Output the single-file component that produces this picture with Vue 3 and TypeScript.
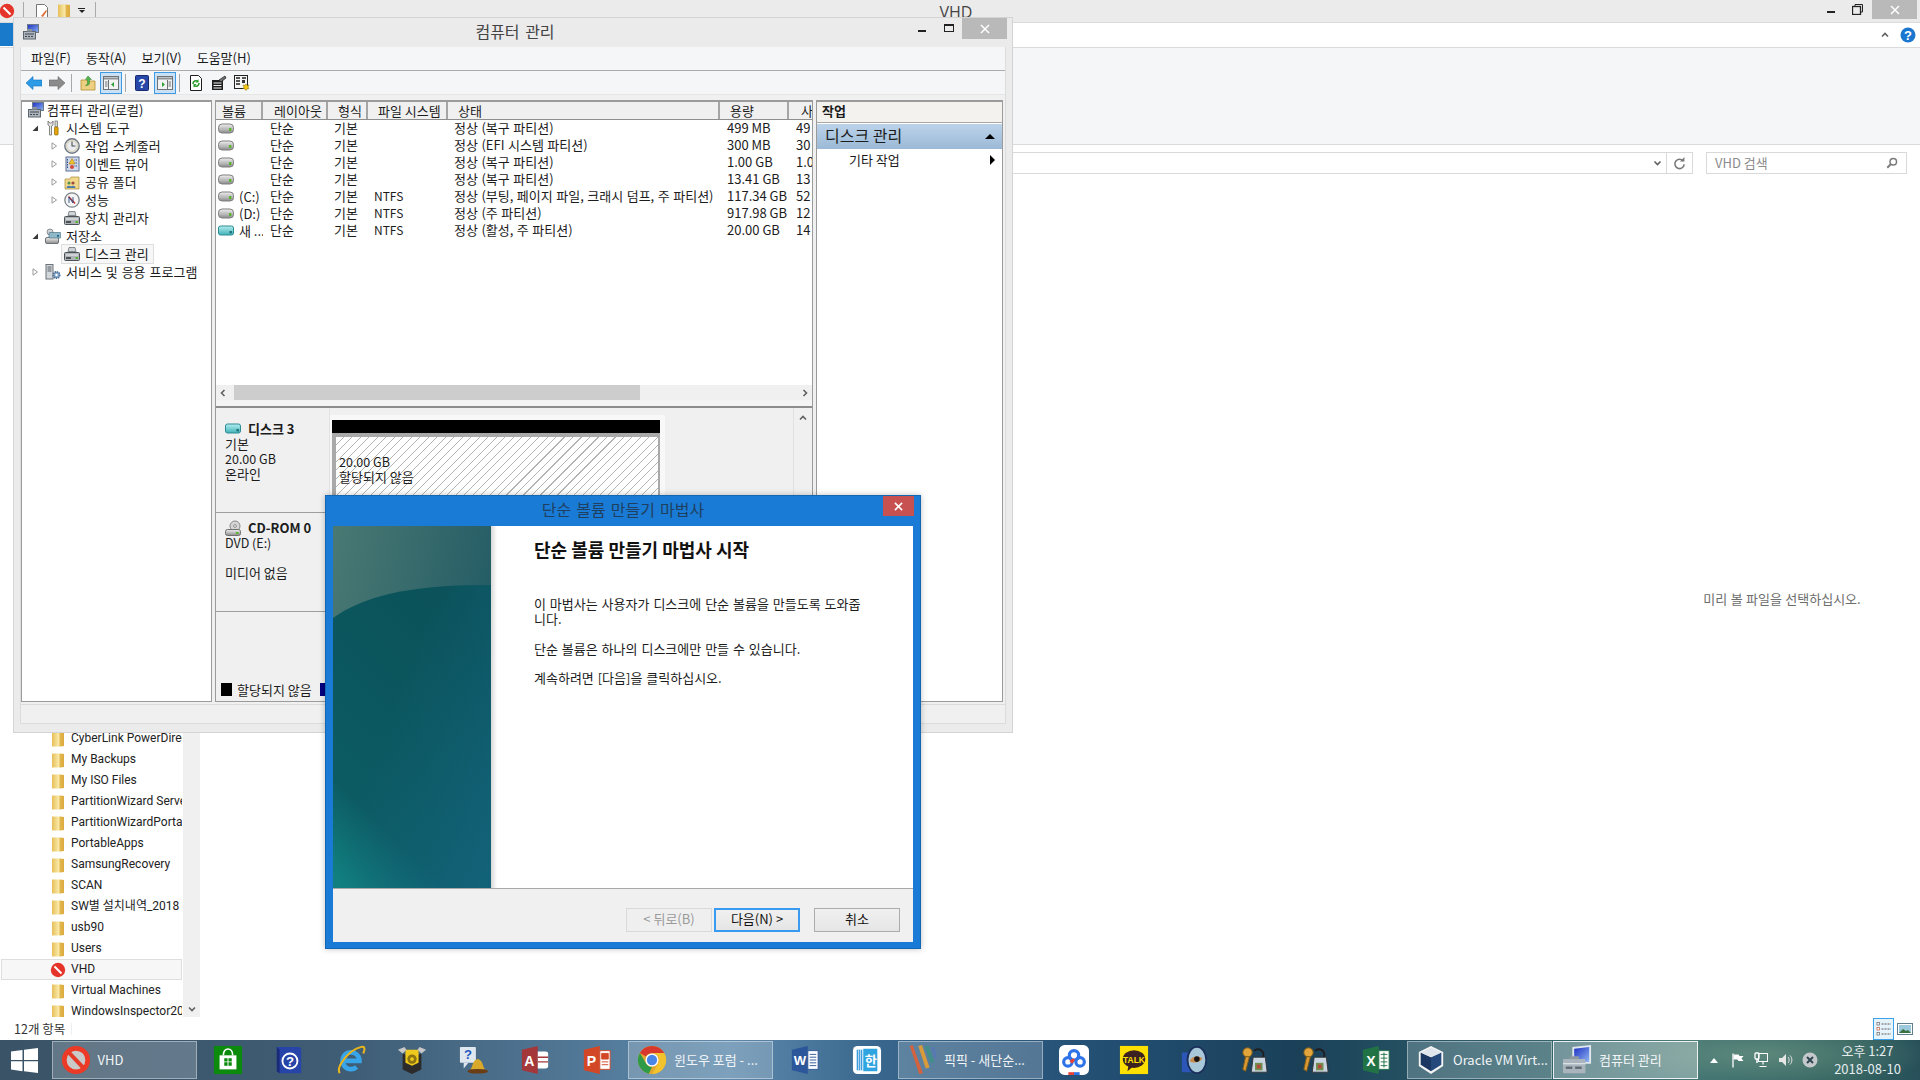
<script setup lang="ts">
interface TreeItem { label: string; icon: string; level: number; twist?: 'open' | 'closed'; selected?: boolean }
interface Volume { name: string; icon?: string; fs: string; status: string; size: string; free: string }
interface TaskItem { icon: string; label?: string; cls?: string }

const tree: TreeItem[] = [
  { label: '컴퓨터 관리(로컬)', icon: 'mmc', level: 0 },
  { label: '시스템 도구', icon: 'tools', level: 1, twist: 'open' },
  { label: '작업 스케줄러', icon: 'clock', level: 2, twist: 'closed' },
  { label: '이벤트 뷰어', icon: 'event', level: 2, twist: 'closed' },
  { label: '공유 폴더', icon: 'share', level: 2, twist: 'closed' },
  { label: '성능', icon: 'gauge', level: 2, twist: 'closed' },
  { label: '장치 관리자', icon: 'dev', level: 2 },
  { label: '저장소', icon: 'storage', level: 1, twist: 'open' },
  { label: '디스크 관리', icon: 'dev', level: 2, selected: true },
  { label: '서비스 및 응용 프로그램', icon: 'svc', level: 1, twist: 'closed' },
]

const columns = ['볼륨', '레이아웃', '형식', '파일 시스템', '상태', '용량', '사']

const volumes: Volume[] = [
  { name: '', fs: '', status: '정상 (복구 파티션)', size: '499 MB', free: '49' },
  { name: '', fs: '', status: '정상 (EFI 시스템 파티션)', size: '300 MB', free: '30' },
  { name: '', fs: '', status: '정상 (복구 파티션)', size: '1.00 GB', free: '1.0' },
  { name: '', fs: '', status: '정상 (복구 파티션)', size: '13.41 GB', free: '13' },
  { name: '(C:)', fs: 'NTFS', status: '정상 (부팅, 페이지 파일, 크래시 덤프, 주 파티션)', size: '117.34 GB', free: '52' },
  { name: '(D:)', fs: 'NTFS', status: '정상 (주 파티션)', size: '917.98 GB', free: '12' },
  { name: '새 ...', icon: 'disk-blue', fs: 'NTFS', status: '정상 (활성, 주 파티션)', size: '20.00 GB', free: '14' },
]

const folders = [
  'CyberLink PowerDirector', 'My Backups', 'My ISO Files', 'PartitionWizard Server', 'PartitionWizardPortable',
  'PortableApps', 'SamsungRecovery', 'SCAN', 'SW별 설치내역_2018', 'usb90', 'Users', 'VHD', 'Virtual Machines',
  'WindowsInspector2018',
]

const taskItems: TaskItem[] = [
  { icon: 'stop-big', label: 'VHD', cls: 'wide' },
  { icon: 'store' }, { icon: 'helpbook' }, { icon: 'ie' }, { icon: 'box' }, { icon: 'bell' }, { icon: 'access' }, { icon: 'ppt' },
  { icon: 'chrome', label: '윈도우 포럼 - ...', cls: 'wide' },
  { icon: 'word', cls: 'loose' }, { icon: 'hanword', cls: 'loose' },
  { icon: 'picpick', label: '픽픽 - 새단순...', cls: 'wide' },
  { icon: 'baidu', cls: 'tight' }, { icon: 'kakao', cls: 'tight' }, { icon: 'eye', cls: 'tight' },
  { icon: 'keys', cls: 'tight' }, { icon: 'keys', cls: 'tight' }, { icon: 'excel', cls: 'tight' },
  { icon: 'vbox', label: 'Oracle VM Virt...', cls: 'wide' },
  { icon: 'mmc-big', label: '컴퓨터 관리', cls: 'wide current' },
]
</script>

<template>
  <div class="desktop">
    <svg class="sprites" width="0" height="0" aria-hidden="true">
      <defs>
        <linearGradient id="g-disk" x1="0" y1="0" x2="0" y2="1"><stop offset="0" stop-color="#f0f0f0" /><stop offset="1" stop-color="#8c8c8c" /></linearGradient>
        <linearGradient id="g-teal" x1="0" y1="0" x2="0" y2="1"><stop offset="0" stop-color="#b5eef0" /><stop offset="1" stop-color="#3fb2b8" /></linearGradient>
        <linearGradient id="g-top" x1="0" y1="0" x2="1" y2="0.45"><stop offset="0" stop-color="#4a7973" /><stop offset="1" stop-color="#215a64" /></linearGradient>
        <linearGradient id="g-low" x1="0.6" y1="0" x2="0.1" y2="1"><stop offset="0" stop-color="#0b525a" /><stop offset="0.75" stop-color="#0c5b63" /><stop offset="1" stop-color="#11807f" /></linearGradient>
        <linearGradient id="g-tint" x1="0.3" y1="0.5" x2="1" y2="1"><stop offset="0" stop-color="#14647f" stop-opacity="0" /><stop offset="1" stop-color="#14647f" stop-opacity="0.8" /></linearGradient>
        <linearGradient id="g-screen" x1="0" y1="0" x2="1" y2="1"><stop offset="0" stop-color="#1c2fc4" /><stop offset="1" stop-color="#8fb6f0" /></linearGradient>
        <linearGradient id="g-folder" x1="0" y1="0" x2="1" y2="0"><stop offset="0" stop-color="#e6bf58" /><stop offset="0.55" stop-color="#f9e9a8" /><stop offset="0.7" stop-color="#e2b64c" /><stop offset="1" stop-color="#dcaa3f" /></linearGradient>
      </defs>
      <symbol id="i-stop" viewBox="0 0 16 16"><circle cx="8" cy="8" r="7.2" fill="#e5352b" /><path d="M3.8 5.2l1.4-1.4 7 7-1.4 1.4z" fill="#fff" /></symbol>
      <symbol id="i-folder" viewBox="0 0 16 16"><path d="M2 1.500h8l4 .5v13l-4 .5H2z" fill="url(#g-folder)" /></symbol>
      <symbol id="i-disk" viewBox="0 0 16 16"><rect x="0.500" y="3" width="15" height="9" rx="3.500" fill="url(#g-disk)" stroke="#7f7f7f" /><path d="M2 8.500h12" stroke="#b9b9b9" /><rect x="11" y="7" width="2.400" height="3" fill="#5cb531" /></symbol>
      <symbol id="i-disk-blue" viewBox="0 0 16 16"><rect x="0.500" y="3" width="15" height="9" rx="2" fill="url(#g-teal)" stroke="#2c8c92" /><rect x="11.500" y="8" width="2.400" height="2.400" fill="#1d6f74" /></symbol>
      <symbol id="i-cd" viewBox="0 0 16 16"><circle cx="10" cy="6" r="5" fill="#d6d6d6" stroke="#8a8a8a" /><circle cx="10" cy="6" r="1.400" fill="#fff" stroke="#8a8a8a" /><rect x="0.500" y="9.500" width="15" height="6" rx="2" fill="url(#g-disk)" stroke="#6f6f6f" /><rect x="11" y="12" width="2.600" height="2" fill="#5cb531" /></symbol>
      <symbol id="i-mmc" viewBox="0 0 16 16"><rect x="4.500" y="0.500" width="11" height="8" fill="url(#g-screen)" stroke="#6d7a88" /><rect x="0.500" y="7.500" width="12" height="7.500" fill="#aeb5bc" stroke="#5c666e" /><path d="M2 10h9M2 12.500h2M5 12.500h2M8 12.500h2" stroke="#3f4850" /><path d="M4 5h5v2.500H4z" fill="#8b949c" /></symbol>
      <symbol id="i-tools" viewBox="0 0 16 16"><path d="M3 1v4l1.500 1v9h2V6L8 5V1L6.500 3h-2z" fill="#e8e8e8" stroke="#6a6a6a" stroke-width=".8" /><rect x="10" y="1" width="2.400" height="6" fill="#d8d8d8" stroke="#6a6a6a" stroke-width=".7" /><rect x="9.500" y="7" width="3.600" height="8" rx="1" fill="#e5a50a" stroke="#8e6703" stroke-width=".7" /></symbol>
      <symbol id="i-clock" viewBox="0 0 16 16"><circle cx="8" cy="8" r="7.200" fill="#e9edef" stroke="#6f7980" stroke-width="1.400" /><path d="M8 3.500V8h3.400" fill="none" stroke="#4a4f52" stroke-width="1.100" /><circle cx="8" cy="8" r="5.400" fill="none" stroke="#c1a26a" stroke-width=".5" /></symbol>
      <symbol id="i-event" viewBox="0 0 16 16"><rect x="2" y="1" width="13" height="14" fill="#cfd9ea" stroke="#5c6f92" /><path d="M3.500 3v10M13 4h-3M13 7h-3M13 10h-3" stroke="#34508c" stroke-dasharray="1.500 1" /><path d="M8 2.500l3 5.500H5z" fill="#f4c430" stroke="#a67c00" stroke-width=".6" /><circle cx="8" cy="11" r="2" fill="#d8483a" /></symbol>
      <symbol id="i-share" viewBox="0 0 16 16"><path d="M1 5h5l1-2h8v12H1z" fill="#f1d88a" stroke="#b19645" stroke-width=".8" /><circle cx="5" cy="9" r="1.600" fill="#5a8f4f" /><circle cx="9" cy="9" r="1.600" fill="#a04b3c" /><path d="M2.500 14c0-3 5-3 5 0M6.500 14c0-3 5-3 5 0" fill="#4e7ca8" /></symbol>
      <symbol id="i-gauge" viewBox="0 0 16 16"><circle cx="8" cy="8" r="7.200" fill="#f4f4f4" stroke="#7b8489" stroke-width="1.300" /><path d="M4.500 4.500l6.500 7" stroke="#d32f2f" stroke-width="1.600" /><path d="M5 11V5l4 6V5" fill="none" stroke="#234e84" stroke-width=".9" /></symbol>
      <symbol id="i-dev" viewBox="0 0 16 16"><path d="M5 1.500h6l1 4H4z" fill="#cfd3d6" stroke="#6a7278" stroke-width=".8" /><rect x="0.500" y="6.500" width="15" height="8" rx="1" fill="#aeb3b8" stroke="#4c5358" /><path d="M2 9h12" stroke="#f1f1f1" /><rect x="2" y="11" width="5" height="2" fill="#4c5358" /><rect x="11.500" y="11" width="2.400" height="2" fill="#5cb531" /></symbol>
      <symbol id="i-storage" viewBox="0 0 16 16"><circle cx="5" cy="4" r="3" fill="#cfd4d8" stroke="#6b7378" stroke-width=".7" /><rect x="0.500" y="9.500" width="13" height="6" rx="1.500" fill="url(#g-disk)" stroke="#6b7378" /><rect x="4" y="4.500" width="12" height="5.500" rx="1" fill="#8fb9c9" stroke="#4e7385" stroke-width=".7" /><rect x="12" y="7" width="2" height="1.600" fill="#1d5f84" /></symbol>
      <symbol id="i-svc" viewBox="0 0 16 16"><rect x="1" y="0.500" width="7" height="14.500" fill="#d2d7db" stroke="#6c7378" /><path d="M2.500 3h4M2.500 5h4M2.500 7h4" stroke="#5a6166" /><circle cx="11.500" cy="11" r="3.300" fill="#7fa3c9" stroke="#47678c" stroke-dasharray="1.400 .8" stroke-width="1.400" /><circle cx="11.500" cy="11" r="1.200" fill="#fff" /></symbol>
      <symbol id="i-back" viewBox="0 0 16 16"><path d="M0 8l7-6.500V5h9v6H7v3.500z" fill="#2d9be6" stroke="#1277c4" stroke-width=".6" /></symbol>
      <symbol id="i-fwd" viewBox="0 0 16 16"><path d="M16 8L9 1.500V5H0v6h9v3.500z" fill="#8b8b8b" stroke="#6d6d6d" stroke-width=".6" /></symbol>
      <symbol id="i-up" viewBox="0 0 16 16"><path d="M1 5h5l1 1h8v9H1z" fill="#eed083" stroke="#b38f2e" stroke-width=".8" /><path d="M8 1l3.500 3.500H9.500V8c0 2-2 2.500-4 2.500 2-1 2-2 2-2.500V4.500h-2z" fill="#4fb64a" stroke="#2f7f2c" stroke-width=".5" /></symbol>
      <symbol id="i-panel-l" viewBox="0 0 16 16"><rect x="0.500" y="1.500" width="15" height="13" fill="#f3f3f3" stroke="#6e7377" /><path d="M1 3.500h14" stroke="#8c9196" stroke-width="2" /><path d="M5.500 5v9" stroke="#6e7377" /><path d="M2 7h2.500M2 9h2.500M2 11h2.500" stroke="#6e7377" /><path d="M11 7v5l-3-2.500z" fill="#30a33a" /></symbol>
      <symbol id="i-panel-r" viewBox="0 0 16 16"><rect x="0.500" y="1.500" width="15" height="13" fill="#f3f3f3" stroke="#6e7377" /><path d="M10.500 5v9" stroke="#6e7377" /><path d="M1 3.500h14" stroke="#8c9196" stroke-width="2" /><path d="M11.500 7H14M11.500 9H14M11.500 11H14" stroke="#6e7377" /><path d="M5 7v5l3-2.500z" fill="#30a33a" /></symbol>
      <symbol id="i-help" viewBox="0 0 16 16"><rect x="1.500" y="0.500" width="13" height="15" rx="1" fill="#2748a8" stroke="#16286e" /><text x="8" y="13" font-size="12" font-weight="700" text-anchor="middle" fill="#fff" font-family="Liberation Sans">?</text></symbol>
      <symbol id="i-refresh" viewBox="0 0 16 16"><path d="M2.500 0.500h8l3 3v12h-11z" fill="#fff" stroke="#1e1e1e" /><path d="M5 9a3 3 0 0 1 5-2.500M11 8a3 3 0 0 1-5 2.500" fill="none" stroke="#2a9a2a" stroke-width="1.500" /><path d="M10.500 4v3.500H7.500zM5.500 12.500V9h3z" fill="#2a9a2a" /></symbol>
      <symbol id="i-props" viewBox="0 0 16 16"><rect x="1" y="5" width="11" height="10" fill="#1f1f1f" /><path d="M2.500 8h8M2.500 10.500h8M2.500 13h8" stroke="#f3f3f3" /><path d="M8 5l6-4 1 2-5 4z" fill="#6f6f6f" stroke="#1f1f1f" stroke-width=".7" /></symbol>
      <symbol id="i-extra" viewBox="0 0 16 16"><rect x="0.500" y="0.500" width="13" height="13" fill="#f5f5f5" stroke="#222" /><path d="M2 3h4M8 3h4M2 6h4M2 9h4" stroke="#222" stroke-width="1.400" /><rect x="8" y="5" width="3" height="3" fill="#333" /><path d="M12 9l1 1.500 2-.5-1 2 1 1.500-2 .5-1 1.500-1-1.500-2-.5 1-1.500-1-2 2 .5z" fill="#f3c614" stroke="#8b6b00" stroke-width=".5" /></symbol>
      <symbol id="i-open" viewBox="0 0 8 8"><path d="M7 1.500V7H1.500z" fill="#3a3a3a" /></symbol>
      <symbol id="i-closed" viewBox="0 0 8 8"><path d="M2 .8L6.500 4 2 7.200z" fill="#fff" stroke="#9a9a9a" /></symbol>
      <symbol id="i-chev" viewBox="0 0 8 8"><path d="M1 5.500L4 2.500l3 3" fill="none" stroke="#606060" stroke-width="1.600" /></symbol>
      <symbol id="i-search" viewBox="0 0 14 14"><circle cx="8.500" cy="5.500" r="3.800" fill="none" stroke="#7a7a7a" stroke-width="1.700" /><path d="M5.500 8.500L1.500 12.500" stroke="#7a7a7a" stroke-width="2.200" /></symbol>
      <symbol id="i-reload" viewBox="0 0 14 14"><path d="M10.800 4.200A5 5 0 1 0 12 8" fill="none" stroke="#7a7a7a" stroke-width="1.700" /><path d="M7.500 4.800h4.800V0z" fill="#7a7a7a" /></symbol>
      <symbol id="i-qhelp" viewBox="0 0 16 16"><circle cx="8" cy="8" r="7.500" fill="#1b76cf" /><text x="8" y="13" font-size="13" font-weight="700" text-anchor="middle" fill="#fff" font-family="Liberation Sans">?</text></symbol>
      <symbol id="i-details" viewBox="0 0 16 16"><path d="M5.500 3H15M5.500 8H15M5.500 13H15" stroke="#5b5b5b" stroke-dasharray="2 1" /><rect x="1" y="1.500" width="2.500" height="2.500" fill="#fff" stroke="#666" stroke-width=".7" /><rect x="1" y="6.500" width="2.500" height="2.500" fill="#fff" stroke="#c65a3a" stroke-width=".7" /><rect x="1" y="11.500" width="2.500" height="2.500" fill="#fff" stroke="#666" stroke-width=".7" /></symbol>
      <symbol id="i-thumb" viewBox="0 0 16 16"><rect x="0.500" y="2.500" width="15" height="11" fill="#fff" stroke="#5f7f91" /><rect x="2" y="4" width="12" height="8" fill="#9cc9dc" /><path d="M2 12l4-4 3 2 2-1 3 3z" fill="#39713f" /></symbol>

      <symbol id="t-stop-big" viewBox="0 0 32 32"><circle cx="16" cy="16" r="13" fill="#c9c9c9" /><circle cx="16" cy="16" r="12.500" fill="none" stroke="#ec3a26" stroke-width="5" /><path d="M6.500 9l3-3 16 17-3 3z" fill="#e53a27" /></symbol>
      <symbol id="t-store" viewBox="0 0 32 32"><rect x="1" y="1" width="30" height="30" fill="#0b8a0b" /><path d="M7 11h18v15H7z" fill="#fff" /><path d="M11 11c0-9 10-9 10 0" fill="none" stroke="#fff" stroke-width="1.800" /><path d="M12 14h3.500v3.500H12zM16.500 14H20v3.500h-3.500zM12 18.500h3.500V22H12zM16.500 18.500H20V22h-3.500z" fill="#0b8a0b" /></symbol>
      <symbol id="t-helpbook" viewBox="0 0 32 32"><path d="M3 2h24l2 2v26H6l-3-2z" fill="#2744a8" /><path d="M3 2v26l3 2V5z" fill="#1a2a78" /><circle cx="17" cy="17" r="8" fill="none" stroke="#fff" stroke-width="2" /><text x="17" y="22" font-size="14" font-weight="700" text-anchor="middle" fill="#fff" font-family="Liberation Sans">?</text></symbol>
      <symbol id="t-ie" viewBox="0 0 32 32"><path d="M9 17h16a9 9 0 1 0-3 6.500" fill="none" stroke="#37a5e8" stroke-width="5" /><path d="M4 30C0 24 12 6 27 2c4-1 4 3 2 7" fill="none" stroke="#e8b51c" stroke-width="2.200" /></symbol>
      <symbol id="t-box" viewBox="0 0 32 32"><path d="M6 9l10 4 10-4v17l-10 5-10-5z" fill="#2b2b2b" /><path d="M9 5h14v14l-7 3-7-3z" fill="#f0c91f" /><circle cx="16" cy="15" r="5" fill="#8c7410" /><circle cx="16" cy="15" r="2" fill="#f0c91f" /><path d="M6 9L1 5l7-3 2 3zM26 9l5-4-7-3-2 3z" fill="#c8c8c8" /></symbol>
      <symbol id="t-bell" viewBox="0 0 32 32"><rect x="1" y="2" width="17" height="17" rx="1" fill="#dfe7ef" /><path d="M5 19v6l5-6z" fill="#dfe7ef" /><text x="9.500" y="15" font-size="14" font-weight="700" text-anchor="middle" fill="#1e5bc0" font-family="Liberation Sans">?</text><path d="M12 26c3-2 2-10 8-11 6 1 5 9 8 11z" fill="#d8a92b" /><ellipse cx="20" cy="28" rx="11" ry="2.500" fill="#6b3d14" /></symbol>
      <symbol id="t-access" viewBox="0 0 32 32"><path d="M2 5l17-4v30L2 27z" fill="#a4373a" /><text x="10" y="22" font-size="15" font-weight="700" text-anchor="middle" fill="#fff" font-family="Liberation Sans">A</text><path d="M19 7h8c2 0 3 1 3 2v14c0 1-1 2-3 2h-8z" fill="#fff" /><path d="M19 13h11M19 18h11" stroke="#a4373a" stroke-width="1.500" /></symbol>
      <symbol id="t-ppt" viewBox="0 0 32 32"><path d="M2 5l17-4v30L2 27z" fill="#d24726" /><text x="10" y="22" font-size="15" font-weight="700" text-anchor="middle" fill="#fff" font-family="Liberation Sans">P</text><path d="M19 6h11v20H19z" fill="#fff" stroke="#d24726" /><path d="M21 9h7v6h-7zM21 18h7M21 21h7" fill="#d24726" stroke="#d24726" /></symbol>
      <symbol id="t-chrome" viewBox="0 0 32 32"><circle cx="16" cy="16" r="15" fill="#e0a82e" /><path d="M16 1a15 15 0 0 1 13 7.500H16a7.500 7.500 0 0 0-6.500 3.800L3.100 8.400A15 15 0 0 1 16 1z" fill="#d9392c" /><path d="M3.100 8.400l6.400 11a7.500 7.500 0 0 0 6.500 4l-3.500 7.300A15 15 0 0 1 3.100 8.400z" fill="#2f9b46" /><path d="M29 8.500H16a7.500 7.500 0 0 1 6.500 11.200l-6.500 11.300A15 15 0 0 0 29 8.500z" fill="#f2c22f" /><circle cx="16" cy="16" r="7" fill="#fff" /><circle cx="16" cy="16" r="5.500" fill="#4a86e8" /></symbol>
      <symbol id="t-word" viewBox="0 0 32 32"><path d="M2 5l17-4v30L2 27z" fill="#2b579a" /><text x="10.500" y="21" font-size="14" font-weight="700" text-anchor="middle" fill="#fff" font-family="Liberation Sans">W</text><path d="M19 6h11v20H19z" fill="#fff" stroke="#2b579a" /><path d="M21 10h7M21 13h7M21 16h7M21 19h7M21 22h7" stroke="#2b579a" /></symbol>
      <symbol id="t-hanword" viewBox="0 0 32 32"><rect x="1" y="1" width="30" height="30" rx="5" fill="#fff" /><path d="M5 5h6v22H5z" fill="#3b9bdc" /><path d="M12 4h15v24H12z" fill="#2fa4e0" /><path d="M7 5v22M9 5v22" stroke="#fff" stroke-width=".7" /><text x="20" y="22" font-size="14" font-weight="700" text-anchor="middle" fill="#fff" font-family="Noto Sans CJK KR">한</text></symbol>
      <symbol id="t-picpick" viewBox="0 0 32 32"><path d="M3 1l3-1 11 30-4 1z" fill="#d5623e" /><path d="M12 1l4-1 8 24-4 1z" fill="#d89a3a" /><path d="M19 1h4l6 17-4 1z" fill="#3f8f8a" /><path d="M26 2h3l3 11-3 1z" fill="#5778b4" /></symbol>
      <symbol id="t-baidu" viewBox="0 0 32 32"><rect x="0" y="0" width="32" height="32" rx="6" fill="#fff" /><g fill="none" stroke-width="3.400"><circle cx="16" cy="11" r="5" stroke="#2e73e8" /><circle cx="9.500" cy="18" r="4.500" stroke="#2e73e8" /><circle cx="22.500" cy="18" r="4.500" stroke="#2e73e8" /></g><path d="M11 17l4-3 2 2-3 4z" fill="#e94235" /><rect x="10" y="29" width="6" height="3" fill="#e94235" /><rect x="16" y="29" width="6" height="3" fill="#2e73e8" /></symbol>
      <symbol id="t-kakao" viewBox="0 0 32 32"><rect x="1" y="1" width="30" height="30" fill="#fee000" /><ellipse cx="16" cy="15" rx="12" ry="9.500" fill="#3b2220" /><path d="M10 22l-1 6 6-5z" fill="#3b2220" /><text x="16" y="19" font-size="9" font-weight="700" text-anchor="middle" fill="#fee000" font-family="Liberation Sans">TALK</text></symbol>
      <symbol id="t-eye" viewBox="0 0 32 32"><rect x="2" y="8" width="21" height="21" fill="#2c56b8" /><ellipse cx="18" cy="16" rx="10" ry="14" fill="#a8c7d8" stroke="#1c2f5a" stroke-width="2" /><path d="M10 17c3-5 9-6 14-3-3 5-9 6-14 3z" fill="#c98a50" /><circle cx="18" cy="15" r="3" fill="#1a1412" /></symbol>
      <symbol id="t-keys" viewBox="0 0 32 32"><path d="M15 6c7-4 12 2 9 8" fill="none" stroke="#1f1f1f" stroke-width="2" /><circle cx="8" cy="8" r="5" fill="#e2a53c" stroke="#7f5a17" /><path d="M6 12l-3 14 3 2 4-15z" fill="#d99a33" stroke="#7f5a17" /><path d="M14 13h13l2 16H12z" fill="#c9d6e2" stroke="#333" /><rect x="16" y="19" width="8" height="8" fill="#6f8f4f" /><rect x="18" y="21" width="4" height="4" fill="#b8463a" /></symbol>
      <symbol id="t-excel" viewBox="0 0 32 32"><path d="M2 5l17-4v30L2 27z" fill="#217346" /><text x="10.500" y="22" font-size="15" font-weight="700" text-anchor="middle" fill="#fff" font-family="Liberation Sans">X</text><path d="M19 6h11v20H19z" fill="#fff" stroke="#217346" /><path d="M21 10h7M21 14h7M21 18h7M21 22h7M24.500 8v16" stroke="#217346" /></symbol>
      <symbol id="t-vbox" viewBox="0 0 32 32"><path d="M16 1l13 6.500v15L16 31 3 22.500v-15z" fill="#f4f4f4" /><path d="M16 13L5 8v13l11 7z" fill="#1b3660" /><path d="M16 13l11-5v13l-11 7z" fill="#24477c" /><path d="M5 8l11-5 11 5-11 5z" fill="#dfe5ea" /></symbol>
      <symbol id="t-mmc-big" viewBox="0 0 32 32"><path d="M11 2l20-2v20H11z" fill="#dfe6ee" /><path d="M13 4l16-2v16H13z" fill="url(#g-screen)" /><rect x="1" y="15" width="24" height="15" rx="1" fill="#aab4bc" /><path d="M1 20h24" stroke="#eef2f5" /><path d="M8 15v-3h10v3" fill="#8d98a0" /><rect x="4" y="23" width="7" height="2.500" fill="#5f6a72" /><rect x="14" y="23" width="7" height="2.500" fill="#5f6a72" /></symbol>
    </svg>

    <!-- 뒤쪽 탐색기 창 -->
    <div class="explorer">
      <header class="ex-title">
        <div class="qat">
          <svg class="ic16 qat-stop"><use href="#i-stop" /></svg>
          <i class="qat-sep"></i>
          <svg class="ic16" viewBox="0 0 16 16"><path d="M2.500 1.500h8l3 3v11h-11z" fill="#fff" stroke="#777" /><path d="M7 13l5-6 1 1-4 6z" fill="#e0703a" /></svg>
          <svg class="ic16"><use href="#i-folder" /></svg>
          <span class="qat-drop"></span>
          <i class="qat-sep last"></i>
        </div>
        <div class="ex-name">VHD</div>
        <div class="ctrl">
          <span class="min"></span>
          <svg class="restore" viewBox="0 0 11 11"><path d="M3 2.500V.5h7.500V8H8.500" fill="none" stroke="#222" /><rect x=".5" y="2.500" width="8" height="8" fill="none" stroke="#222" stroke-width="1.300" /></svg>
          <span class="close"><svg viewBox="0 0 10 10"><path d="M1 1l8 8M9 1l-8 8" stroke="#fff" stroke-width="1.500" /></svg></span>
        </div>
      </header>
      <div class="ex-tabs">
        <span class="file-tab"></span>
        <svg class="ex-chev"><use href="#i-chev" /></svg>
        <svg class="ic16 ex-help"><use href="#i-qhelp" /></svg>
      </div>
      <div class="ribbon"></div>
      <div class="address">
        <div class="addr-box">
          <svg class="addr-chev"><use href="#i-chev" /></svg>
          <span class="addr-refresh"><svg viewBox="0 0 14 14"><use href="#i-reload" /></svg></span>
        </div>
        <div class="search">
          <span>VHD 검색</span>
          <svg viewBox="0 0 14 14"><use href="#i-search" /></svg>
        </div>
      </div>
      <div class="ex-body">
        <nav class="nav">
          <ul class="nav-list">
            <li v-for="f in folders" :key="f" class="nav-row" :class="{ on: f === 'VHD' }">
              <svg class="ic16"><use :href="f === 'VHD' ? '#i-stop' : '#i-folder'" /></svg>
              <span>{{ f }}</span>
            </li>
          </ul>
          <div class="nav-scroll"><svg class="chev-down"><use href="#i-chev" /></svg></div>
        </nav>
        <div class="ex-main"></div>
        <div class="preview"><span>미리 볼 파일을 선택하십시오.</span></div>
      </div>
      <footer class="ex-status">
        <span class="count">12개 항목</span>
        <i class="count-sep"></i>
        <span class="view-btn active"><svg class="ic16"><use href="#i-details" /></svg></span>
        <span class="view-btn"><svg class="ic16"><use href="#i-thumb" /></svg></span>
      </footer>
    </div>

    <!-- 작업 표시줄 -->
    <div class="taskbar">
      <span class="start">
        <svg viewBox="0 0 27 25"><path d="M0 3.500l11.500-1.600v10H0zM13 1.700L27 0v11.900H13zM0 13.200h11.500v10L0 21.600zM13 13.200h14V25l-14-1.700z" fill="#fff" /></svg>
      </span>
      <div v-for="(t, i) in taskItems" :key="i" class="task" :class="t.cls">
        <svg class="ic30"><use :href="'#t-' + t.icon" /></svg>
        <span v-if="t.label">{{ t.label }}</span>
      </div>
      <div class="tray">
        <span class="tray-cell"><i class="tray-up"></i></span>
        <span class="tray-cell"><svg viewBox="0 0 16 16"><path d="M3 1.500v14" stroke="#fff" stroke-width="1.300" /><path d="M3.500 2.500h5l1 1.500h4l-2 2.500 2 2.500h-5l-1-1.500h-4z" fill="#fff" /></svg></span>
        <span class="tray-cell"><svg viewBox="0 0 16 16"><rect x="4.500" y="1.500" width="9" height="8" fill="none" stroke="#fff" /><path d="M9 9.500v3M5.500 14.500h7" stroke="#fff" stroke-width="1.200" /><rect x="1" y="1" width="4" height="6" rx="1" fill="none" stroke="#fff" stroke-width="1.300" /><path d="M3 7v4" stroke="#fff" stroke-width="1.500" /></svg></span>
        <span class="tray-cell"><svg viewBox="0 0 16 16"><path d="M1 6h3l4-4v12l-4-4H1z" fill="#e6e6e6" /><path d="M10 5c1.500 1.500 1.500 4.500 0 6M12 3.500c2.500 2.500 2.500 6.500 0 9" fill="none" stroke="#e6e6e6" /></svg></span>
        <span class="tray-cell"><svg viewBox="0 0 16 16"><circle cx="8" cy="8" r="7.500" fill="#c4c8cb" /><path d="M5 5l6 6M11 5l-6 6" stroke="#2e4650" stroke-width="2" /></svg></span>
        <div class="clock"><div>오후 1:27</div><div>2018-08-10</div></div>
      </div>
    </div>

    <!-- 컴퓨터 관리 창 -->
    <section class="mmc">
      <header class="mmc-title">
        <svg class="ic16 mmc-ic"><use href="#i-mmc" /></svg>
        <div class="mmc-name">컴퓨터 관리</div>
        <div class="ctrl">
          <span class="min"></span>
          <span class="max"></span>
          <span class="close"><svg viewBox="0 0 10 10"><path d="M1 1l8 8M9 1l-8 8" stroke="#fff" stroke-width="1.500" /></svg></span>
        </div>
      </header>
      <div class="mmc-inner">
        <div class="menu"><span>파일(F)</span><span>동작(A)</span><span>보기(V)</span><span>도움말(H)</span></div>
        <div class="toolbar">
          <span class="tb"><svg class="ic16"><use href="#i-back" /></svg></span>
          <span class="tb"><svg class="ic16"><use href="#i-fwd" /></svg></span>
          <i class="tb-sep"></i>
          <span class="tb"><svg class="ic16"><use href="#i-up" /></svg></span>
          <span class="tb on"><svg class="ic16"><use href="#i-panel-l" /></svg></span>
          <i class="tb-sep"></i>
          <span class="tb"><svg class="ic16"><use href="#i-help" /></svg></span>
          <span class="tb on"><svg class="ic16"><use href="#i-panel-r" /></svg></span>
          <i class="tb-sep"></i>
          <span class="tb"><svg class="ic16"><use href="#i-refresh" /></svg></span>
          <span class="tb"><svg class="ic16"><use href="#i-props" /></svg></span>
          <span class="tb"><svg class="ic16"><use href="#i-extra" /></svg></span>
        </div>
        <div class="panes">
          <aside class="tree">
            <div v-for="t in tree" :key="t.label" class="tree-row">
              <span class="twist" :style="{ width: t.level * 19 + 4 + 'px' }">
                <svg v-if="t.twist" class="tw"><use :href="'#i-' + t.twist" /></svg>
              </span>
              <span class="tree-item" :class="{ sel: t.selected }">
                <svg class="ic16"><use :href="'#i-' + t.icon" /></svg>
                <span>{{ t.label }}</span>
              </span>
            </div>
          </aside>

          <div class="center">
            <div class="list">
              <div class="grid head">
                <span v-for="c in columns" :key="c" class="hcell">{{ c }}</span>
              </div>
              <div v-for="(v, i) in volumes" :key="i" class="grid row">
                <span class="cell vol"><svg class="ic16"><use :href="'#i-' + (v.icon || 'disk')" /></svg>{{ v.name }}</span>
                <span class="cell">단순</span>
                <span class="cell basic">기본</span>
                <span class="cell fs">{{ v.fs }}</span>
                <span class="cell status">{{ v.status }}</span>
                <span class="cell">{{ v.size }}</span>
                <span class="cell">{{ v.free }}</span>
              </div>
            </div>
            <div class="hscroll">
              <svg class="chev-left"><use href="#i-chev" /></svg>
              <div class="hscroll-track"><div class="hscroll-thumb"></div></div>
              <svg class="chev-right"><use href="#i-chev" /></svg>
            </div>
            <div class="split"></div>
            <div class="disks">
              <div class="disks-list">
                <div class="disk-row first">
                  <div class="disk-info">
                    <div class="disk-name"><svg class="ic16"><use href="#i-disk-blue" /></svg>디스크 3</div>
                    <div>기본</div>
                    <div class="small">20.00 GB</div>
                    <div>온라인</div>
                  </div>
                  <div class="partition">
                    <div class="part-bar"></div>
                    <div class="part-body">
                      <div class="small">20.00 GB</div>
                      <div>할당되지 않음</div>
                    </div>
                  </div>
                </div>
                <div class="disk-row second">
                  <div class="disk-info">
                    <div class="disk-name"><svg class="ic16"><use href="#i-cd" /></svg>CD-ROM 0</div>
                    <div class="small">DVD (E:)</div>
                    <div>&nbsp;</div>
                    <div>미디어 없음</div>
                  </div>
                </div>
              </div>
              <div class="disks-scroll"><svg class="chev-up"><use href="#i-chev" /></svg></div>
            </div>
            <div class="legend">
              <i class="swatch black"></i><span>할당되지 않음</span><i class="swatch navy"></i>
            </div>
          </div>

          <aside class="actions">
            <div class="act-head">작업</div>
            <div class="act-section"><span>디스크 관리</span><i class="tri-up"></i></div>
            <div class="act-item"><span>기타 작업</span><i class="tri-right"></i></div>
          </aside>
        </div>
        <div class="mmc-status"></div>
      </div>
    </section>

    <!-- 마법사 대화상자 -->
    <section class="wizard">
      <header class="wiz-title">
        <span>단순 볼륨 만들기 마법사</span>
        <span class="wiz-close"><svg viewBox="0 0 10 10"><path d="M1 1l8 8M9 1l-8 8" stroke="#fff" stroke-width="1.700" /></svg></span>
      </header>
      <div class="wiz-inner">
        <div class="wiz-main">
          <svg class="wiz-art" viewBox="0 0 158 362" preserveAspectRatio="none">
            <rect width="158" height="362" fill="url(#g-top)" />
            <path d="M0 92C30 70 80 58 158 59V362H0z" fill="url(#g-low)" />
            <path d="M0 92C30 70 80 58 158 59V362H0z" fill="url(#g-tint)" />
          </svg>
          <div class="wiz-text">
            <h1>단순 볼륨 만들기 마법사 시작</h1>
            <p>이 마법사는 사용자가 디스크에 단순 볼륨을 만들도록 도와줍니다.</p>
            <p>단순 볼륨은 하나의 디스크에만 만들 수 있습니다.</p>
            <p>계속하려면 [다음]을 클릭하십시오.</p>
          </div>
        </div>
        <footer class="wiz-foot">
          <button type="button" class="btn" disabled>&lt; 뒤로(B)</button>
          <button type="button" class="btn focus">다음(N) &gt;</button>
          <button type="button" class="btn cancel">취소</button>
        </footer>
      </div>
    </section>
  </div>
</template>

<style scoped>
.desktop {
  position: relative;
  width: 1920px;
  height: 1080px;
  overflow: hidden;
  display: flex;
  flex-direction: column;
  background: #fff;
  color: #1c1c1c;
  font-family: "Noto Sans CJK KR", "Noto Sans", sans-serif;
  font-size: 13px;
  line-height: 15px;
}
.sprites { position: absolute; }
.ic16 { width: 16px; height: 16px; flex: none; display: block; }
.ic30 { width: 30px; height: 30px; flex: none; display: block; }
.small { font-size: 12.500px; }

/* explorer */
.explorer { height: 1040px; display: flex; flex-direction: column; }
.ex-title {
  height: 22px;
  flex: none;
  background: #ebebeb;
  display: grid;
  grid-template-columns: 1fr auto 1fr;
  padding-right: 3px;
  border-bottom: 1px solid #dadada;
  box-sizing: content-box;
}
.qat { display: flex; align-items: center; gap: 6px; height: 21px; }
.qat-stop { margin-left: -1px; }
.qat-sep { width: 1px; height: 17px; background: #aaa; margin: 0 4px 0 2px; }
.qat-sep.last { margin: 0 0 0 4px; }
.qat-drop { width: 7px; height: 4px; border-top: 1px solid #222; position: relative; }
.qat-drop::after { content: ""; position: absolute; left: 1px; top: 1px; border: 3px solid transparent; border-top-color: #222; border-bottom: 0; }
.ex-name { font-size: 16px; line-height: 24px; color: #444; margin-right: 5px; font-family: "Open Sans", sans-serif; }
.ctrl { display: flex; align-items: flex-start; justify-content: flex-end; }
.min { width: 8px; height: 2px; background: #222; margin-top: 11px; }
.restore { width: 11px; height: 11px; margin: 4px 9px 0 17px; }
.close { width: 45px; height: 19px; background: #b9b9b9; display: flex; align-items: center; justify-content: center; }
.close svg { width: 10px; height: 10px; }
.ex-tabs { height: 24px; flex: none; background: #fff; display: flex; align-items: center; border-bottom: 1px solid #dadada; }
.file-tab { width: 13px; height: 23px; background: #1979ca; margin-right: auto; align-self: flex-start; }
.ex-chev { width: 10px; height: 8px; margin-right: 10px; }
.ex-help { margin-right: 4px; }
.ribbon { height: 96px; flex: none; background: #f5f6f7; border-bottom: 1px solid #dadada; }
.address { height: 36px; flex: none; display: flex; gap: 13px; padding: 7px 13px 0 100px; box-sizing: border-box; }
.addr-box, .search { height: 22px; box-sizing: border-box; border: 1px solid #d9d9d9; display: flex; align-items: center; justify-content: flex-end; }
.addr-box { flex: 1; }
.addr-chev { width: 9px; height: 8px; margin-right: 4px; transform: rotate(180deg); }
.addr-refresh { width: 25px; height: 20px; border-left: 1px solid #d9d9d9; display: flex; align-items: center; justify-content: center; }
.addr-refresh svg { width: 13px; height: 13px; }
.search { width: 201px; padding: 0 8px; color: #8b8b8b; justify-content: space-between; }
.search span { padding-bottom: 2px; }
.search svg { width: 12px; height: 12px; }
.ex-body { flex: 1; display: flex; min-height: 0; }
.nav { width: 200px; flex: none; display: flex; }
.nav-list { width: 183px; list-style: none; margin: 0; padding: 0; display: flex; flex-direction: column; justify-content: flex-end; overflow: hidden; font-family: Roboto, "Noto Sans CJK KR", sans-serif; font-size: 12px; }
.nav-row { height: 21px; flex: none; box-sizing: border-box; display: flex; align-items: center; gap: 5px; padding-left: 49px; white-space: nowrap; color: #222; border: 1px solid transparent; }
.nav-row:last-child { margin-bottom: -5px; }
.nav-row.on { background: #f7f7f7; border-color: #dedede; margin-left: 1px; padding-left: 48px; }
.nav-scroll { width: 17px; margin-left: 1px; background: #f0f0f0; display: flex; flex-direction: column; justify-content: flex-end; align-items: center; padding-bottom: 4px; box-sizing: border-box; }
.chev-down { width: 10px; height: 8px; transform: rotate(180deg); }
.ex-main { flex: 1; }
.preview { width: 276px; flex: none; display: flex; align-items: center; justify-content: center; color: #6d6d6d; word-spacing: 0.500px; }
.preview span { padding-bottom: 2px; }
.ex-status { height: 23px; flex: none; display: flex; align-items: center; padding-right: 5px; }
.count { margin-left: 14px; color: #333; font-size: 12.500px; }
.count-sep { width: 1px; height: 12px; background: #eee; margin-left: 6px; margin-right: auto; }
.view-btn { width: 21px; height: 22px; box-sizing: border-box; display: flex; align-items: center; justify-content: center; border: 1px solid transparent; }
.view-btn.active { border-color: #3ea0e8; background: #e5f3fb; }

/* taskbar */
.taskbar {
  height: 40px;
  flex: none;
  display: flex;
  align-items: center;
  background:
    radial-gradient(ellipse 170px 34px at 1760px 14px, rgba(115, 155, 135, 0.6), transparent),
    linear-gradient(90deg, #3a5366 0, #3f5d75 350px, #5d89ac 730px, #38668c 880px, #234f73 1100px, #1a4058 1300px, #2b5b68 1480px, #3f7272 1680px, #33625f 1850px, #27505a 1920px);
  color: #f0f4f6;
}
.start { width: 51px; flex: none; height: 40px; display: flex; align-items: center; padding-left: 11px; box-sizing: border-box; }
.start svg { width: 27px; height: 25px; }
.task { width: 61.500px; flex: none; height: 38px; display: flex; align-items: center; justify-content: center; }
.task.loose { width: 62px; }
.task.tight { width: 60.500px; }
.task.wide {
  width: 145px;
  margin: 0 0.500px;
  justify-content: flex-start;
  padding-left: 8px;
  gap: 7px;
  box-sizing: border-box;
  border: 1px solid rgba(255, 255, 255, 0.4);
  background: rgba(255, 255, 255, 0.2);
  white-space: nowrap;
  color: #f2f5f7;
}
.task.wide span { padding-bottom: 2px; }
.task.current { border-color: rgba(255, 255, 255, 0.85); background: rgba(255, 255, 255, 0.32); }
.tray { display: flex; align-items: center; margin-left: 3px; }
.tray-cell { width: 24px; height: 40px; display: flex; align-items: center; justify-content: center; }
.tray-cell svg { width: 16px; height: 16px; }
.tray-up { border: 4px solid transparent; border-bottom: 5px solid #fff; border-top: 0; }
.clock { width: 82px; margin-left: 5px; text-align: center; line-height: 18px; color: #e4ecee; }

/* computer management */
.mmc {
  position: absolute;
  left: 13px;
  top: 17px;
  width: 1000px;
  height: 716px;
  box-sizing: border-box;
  background: #ebebeb;
  border: 1px solid #d4d4d4;
  display: flex;
  flex-direction: column;
}
.mmc-title { height: 29px; flex: none; display: grid; grid-template-columns: 1fr auto 1fr; padding: 0 5px 0 9px; }
.mmc-ic { margin-top: 6px; }
.mmc-name { font-size: 16px; line-height: 27px; color: #444; word-spacing: 2px; }
.mmc-title .min { margin-top: 12px; }
.max { width: 10px; height: 8px; box-sizing: border-box; border: 1px solid #222; border-top-width: 2px; margin: 6px 8px 0 18px; }
.mmc-title .close { height: 21px; width: 45px; }
.mmc-inner { flex: 1; margin: 0 6px 8px; display: flex; flex-direction: column; min-height: 0; background: #f0f0f0; border: 1px solid #dcdcdc; border-top: 0; }
.menu { height: 23px; flex: none; display: flex; gap: 15px; align-items: center; padding-left: 10px; background: #f5f6f8; border-bottom: 1px solid #ababab; box-sizing: content-box; }
.menu span { padding-bottom: 2px; }
.toolbar { height: 23px; flex: none; display: flex; align-items: center; gap: 1px; padding-left: 2px; background: #f5f6f8; border-bottom: 1px solid #e6e6e6; }
.tb { width: 22px; height: 22px; box-sizing: border-box; display: flex; align-items: center; justify-content: center; border: 1px solid transparent; }
.tb.on { border-color: #3d9be6; background: #c9e0f5; }
.tb-sep { width: 1px; height: 18px; background: #a8a8a8; margin: 0 4px 0 2px; }
.panes { height: 602px; margin-top: 5px; flex: none; display: grid; grid-template-columns: 191px 598px 187px; column-gap: 3px; padding-left: 0; }
.tree, .center, .actions { box-sizing: border-box; border: 1px solid #9b9b9b; border-top-width: 2px; }
.tree { background: #fff; }
.tree-row { height: 18px; display: flex; align-items: center; white-space: nowrap; word-spacing: 1px; }
.tree-row:first-child { margin-top: -1px; }
.tree-row:first-child .tree-item { gap: 3px; }
.twist { flex: none; display: flex; justify-content: flex-end; padding-right: 6px; box-sizing: border-box; }
.tw { width: 8px; height: 8px; display: block; }
.tree-item { display: flex; align-items: center; gap: 5px; height: 18px; box-sizing: border-box; }
.tree-item span { padding-bottom: 2px; }
.tree-item.sel { background: #f7f7f7; outline: 1px solid #dedede; padding-right: 4px; margin-left: -2px; padding-left: 2px; }

.center { background: #fff; display: flex; flex-direction: column; min-width: 0; }
.list { height: 283px; flex: none; overflow: hidden; }
.grid { display: grid; grid-template-columns: 47px 65px 40px 80px 272px 69px 23px; }
.head { height: 18px; background: #f0f0f0; border-bottom: 1px solid #8e8e8e; box-sizing: border-box; }
.hcell { padding-left: 10px; line-height: 17px; border-right: 2px solid #a5a5a5; overflow: hidden; white-space: nowrap; }
.hcell:first-child { padding-left: 6px; }
.hcell:nth-child(2) { padding-left: 11px; }
.hcell:last-child { border-right: 0; padding-left: 12px; }
.row { height: 17px; line-height: 16px; }
.cell { padding-left: 7px; white-space: nowrap; overflow: hidden; }
.cell.basic { padding-left: 6px; }
.cell.fs { font-size: 12px; padding-left: 6px; }
.cell.status { word-spacing: 0.600px; padding-left: 6px; }
.cell.vol { padding-left: 2px; display: flex; align-items: center; gap: 5px; }
.hscroll { height: 15px; flex: none; display: flex; align-items: center; background: #f0f0f0; padding: 0 2px; gap: 2px; }
.chev-left { width: 10px; height: 8px; transform: rotate(-90deg); flex: none; }
.chev-right { width: 10px; height: 8px; transform: rotate(90deg); flex: none; }
.chev-up { width: 10px; height: 8px; display: block; }
.hscroll-track { flex: 1; height: 15px; }
.hscroll-thumb { width: 406px; height: 15px; margin-left: 4px; background: #cdcdcd; }
.split { height: 8px; flex: none; box-sizing: border-box; background: #f4f4f4; border-bottom: 2px solid #8d8d8d; }
.disks { height: 275px; flex: none; display: flex; background: #f0f0f0; }
.disks-list { flex: 1; min-width: 0; }
.disks-scroll { width: 19px; flex: none; background: #f0f0f0; border-left: 1px solid #e2e2e2; display: flex; justify-content: center; padding-top: 6px; box-sizing: border-box; }
.disk-row { display: flex; box-sizing: border-box; border-bottom: 1px solid #9e9e9e; margin-right: -19px; }
.disk-row.first { height: 105px; }
.disk-row.second { height: 99px; }
.disk-info { width: 114px; flex: none; padding: 13px 0 0 9px; box-sizing: border-box; border-right: 1px solid #e2e2e2; }
.second .disk-info { padding-top: 7px; border-right: 0; }
.disk-name { display: flex; align-items: center; height: 15px; gap: 7px; font-weight: 700; }
.partition { width: 335px; flex: none; box-sizing: border-box; background: #f8f8f8; margin-top: 7px; padding: 5px 5px 0 2px; overflow: hidden; }
.part-bar { height: 13px; background: #000; }
.part-body {
  height: 90px;
  box-sizing: border-box;
  border: 4px solid #a9a9a9;
  border-right-width: 2px;
  padding: 17px 0 0 3px;
  background: repeating-linear-gradient(135deg, #fff 0, #fff 5.200px, #b4b4b4 5.200px, #b4b4b4 6px);
}
.legend { flex: 1; background: #f0f0f0; display: flex; align-items: flex-start; padding-left: 5px; gap: 5px; }
.legend span { margin-top: -1px; }
.swatch { width: 11px; height: 13px; flex: none; }
.swatch.black { background: #000; }
.swatch.navy { background: #00007f; margin-left: 3px; }

.actions { background: #fff; }
.act-head { height: 21px; line-height: 18px; padding-left: 5px; font-weight: 700; background: #f3f2ef; border-bottom: 1px solid #a8a8a8; box-sizing: border-box; }
.act-section { height: 25px; margin-top: 1px; display: flex; align-items: center; justify-content: space-between; padding: 0 7px 0 8px; font-size: 16px; background: linear-gradient(#bcd3ea, #9bb9d6); }
.act-section span, .act-item span { padding-bottom: 2px; }
.act-item { height: 22px; display: flex; align-items: center; justify-content: space-between; padding: 0 7px 0 32px; }
.tri-up { border: 5px solid transparent; border-bottom: 5px solid #000; border-top: 0; }
.tri-right { border: 5px solid transparent; border-left: 5px solid #000; border-right: 0; }
.mmc-status { flex: 1; margin-top: 2px; border-top: 1px solid #dcdcdc; }

/* wizard */
.wizard {
  position: absolute;
  left: 325px;
  top: 495px;
  width: 596px;
  height: 454px;
  box-sizing: border-box;
  background: #197bd5;
  border: 1px solid #1467b3;
  display: flex;
  flex-direction: column;
  box-shadow: 0 0 6px rgba(0, 0, 0, 0.25);
}
.wiz-title { height: 30px; flex: none; display: flex; justify-content: center; align-items: center; font-size: 16px; word-spacing: 1.500px; color: #1f3f60; position: relative; padding-bottom: 3px; box-sizing: border-box; }
.wiz-close { position: absolute; right: 6px; top: 0; width: 31px; height: 20px; background: #c75050; display: flex; align-items: center; justify-content: center; }
.wiz-close svg { width: 9px; height: 9px; }
.wiz-inner { flex: 1; margin: 0 7px 6px; display: flex; flex-direction: column; background: #fff; min-height: 0; }
.wiz-main { height: 362px; flex: none; display: flex; }
.wiz-art { width: 158px; height: 362px; flex: none; display: block; }
.wiz-text { flex: 1; padding: 11px 0 0 43px; background: linear-gradient(90deg, #d8d8d8, #fff 6px); }
.wiz-text h1 { margin: 0 0 35px; font-size: 18px; line-height: 24px; font-weight: 700; color: #111; }
.wiz-text p { width: 335px; margin: 0 0 14.500px; word-break: break-all; word-spacing: 1px; color: #1c1c1c; }
.wiz-foot { flex: 1; display: flex; justify-content: flex-end; gap: 2px; padding: 19px 13px 0 0; box-sizing: border-box; background: #f0f0f0; border-top: 1px solid #a8a8a8; }
.btn { width: 86px; height: 24px; box-sizing: border-box; border: 1px solid #acacac; background: linear-gradient(#f0f0f0, #e5e5e5); font: inherit; color: #111; padding: 0 0 3px; }
.btn:disabled { color: #9a9a9a; background: #efefef; border-color: #d9d9d9; }
.btn.focus { border: 2px solid #3a9af0; }
.btn.cancel { margin-left: 12px; }
</style>

<style>
html, body { margin: 0; padding: 0; background: #fff; }
</style>
